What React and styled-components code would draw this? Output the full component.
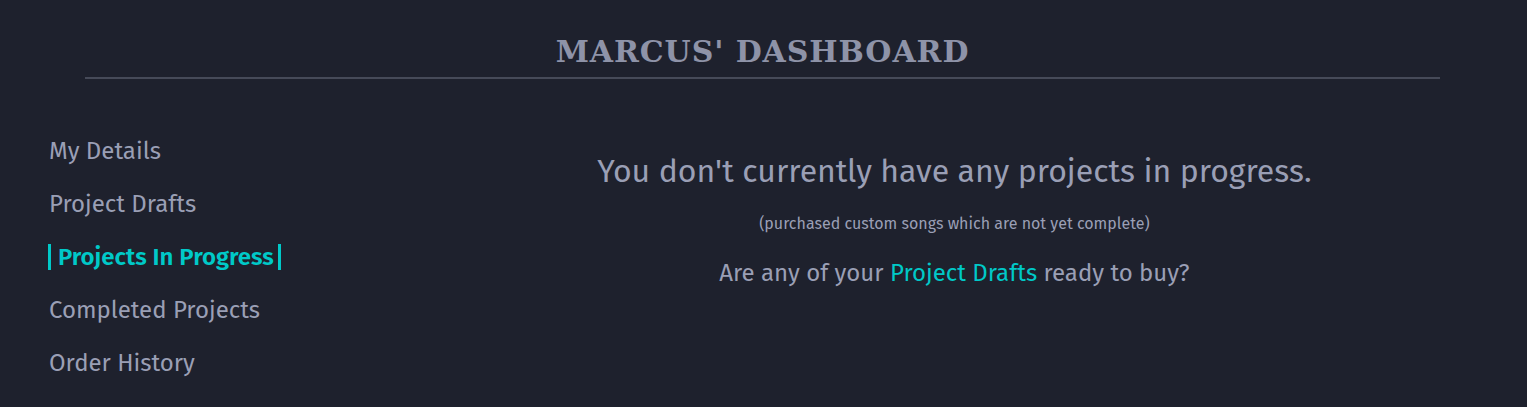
import React from 'react';
import styled, { createGlobalStyle } from 'styled-components';

const GlobalStyle = createGlobalStyle`
  html, body {
    margin: 0;
    padding: 0;
    background: #1e212d;
  }
  body {
    font-family: 'Fira Sans', 'Noto Sans', 'Open Sans', sans-serif;
    color: #9a9fb5;
  }
`;

const Page = styled.div`
  min-height: 407px;
  background: #1e212d;
`;

const Header = styled.header`
  padding-top: 33px;
  margin: 0 87px 0 85px;
  border-bottom: 2px solid #464a58;
  text-align: center;
`;

const Title = styled.h1`
  margin: 0;
  padding-bottom: 6px;
  font-family: 'Rockwell', 'DejaVu Serif', 'Liberation Serif', serif;
  font-weight: bold;
  font-size: 30px;
  line-height: 38px;
  letter-spacing: 0.9px;
  color: #8e93a8;
`;

const Body = styled.div`
  display: grid;
  grid-template-columns: 25% 75%;
  padding-top: 56px;
`;

const SideNav = styled.ul`
  list-style: none;
  margin: 0;
  padding: 0 0 0 48px;
  display: flex;
  flex-direction: column;
  gap: 21px;
`;

const NavItem = styled.li`
  align-self: flex-start;
  font-size: 24px;
  line-height: ${(p) => (p.$active ? '26px' : '32px')};
  margin: ${(p) => (p.$active ? '3px 0' : '0')};
  color: ${(p) => (p.$active ? '#00c9c8' : '#9a9fb5')};
  font-weight: ${(p) => (p.$active ? 600 : 400)};
  padding: ${(p) => (p.$active ? '0 4px 0 7px' : '0 1px')};
  border-left: ${(p) => (p.$active ? '3px solid #00c9c8' : 'none')};
  border-right: ${(p) => (p.$active ? '3px solid #00c9c8' : 'none')};
`;

const Main = styled.main`
  text-align: center;
  padding-top: 15px;
`;

const Heading = styled.h2`
  margin: 0;
  font-size: 32px;
  font-weight: 400;
  line-height: 42px;
  color: #9a9fb5;
`;

const Note = styled.p`
  margin: 21px 0 0;
  font-size: 16px;
  line-height: 22px;
  color: #9a9fb5;
`;

const Prompt = styled.p`
  margin: 22px 0 0;
  font-size: 24px;
  line-height: 32px;
  color: #9a9fb5;
`;

const Link = styled.a`
  color: #00c9c8;
  text-decoration: none;
`;

const items = [
  'My Details',
  'Project Drafts',
  'Projects In Progress',
  'Completed Projects',
  'Order History',
];

export default function App() {
  return (
    <Page>
      <GlobalStyle />
      <Header>
        <Title>MARCUS' DASHBOARD</Title>
      </Header>
      <Body>
        <SideNav>
          {items.map((label) => (
            <NavItem key={label} $active={label === 'Projects In Progress'}>
              {label}
            </NavItem>
          ))}
        </SideNav>
        <Main>
          <Heading>You don't currently have any projects in progress.</Heading>
          <Note>(purchased custom songs which are not yet complete)</Note>
          <Prompt>
            Are any of your <Link href="#">Project Drafts</Link> ready to buy?
          </Prompt>
        </Main>
      </Body>
    </Page>
  );
}
